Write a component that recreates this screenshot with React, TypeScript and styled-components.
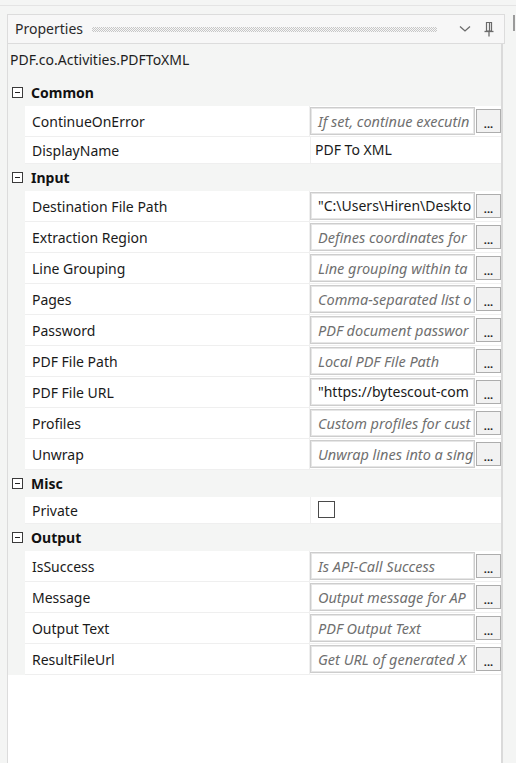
import React from 'react'
import styled, { createGlobalStyle } from 'styled-components'

const GlobalStyle = createGlobalStyle`
    body {
        margin: 0;
        background: #f4f5f4;
        font-family: "Noto Sans", "Open Sans", sans-serif;
        color: #1b1b1b;
    }
`

type Prop = {
    label: string
    value?: string
    hint?: string
    kind?: 'text' | 'plain' | 'check'
}

type Group = {
    name: string
    props: Prop[]
}

// values are cut where the editor box cuts them in the designer
const groups: Group[] = [
    {
        name: 'Common',
        props: [
            { label: 'ContinueOnError', hint: 'If set, continue executin' },
            { label: 'DisplayName', value: 'PDF To XML', kind: 'plain' },
        ],
    },
    {
        name: 'Input',
        props: [
            { label: 'Destination File Path', value: '"C:\\Users\\Hiren\\Deskto' },
            { label: 'Extraction Region', hint: 'Defines coordinates for' },
            { label: 'Line Grouping', hint: 'Line grouping within ta' },
            { label: 'Pages', hint: 'Comma-separated list o' },
            { label: 'Password', hint: 'PDF document passwor' },
            { label: 'PDF File Path', hint: 'Local PDF File Path' },
            { label: 'PDF File URL', value: '"https://bytescout-com' },
            { label: 'Profiles', hint: 'Custom profiles for cust' },
            { label: 'Unwrap', hint: 'Unwrap lines into a sing' },
        ],
    },
    {
        name: 'Misc',
        props: [{ label: 'Private', kind: 'check' }],
    },
    {
        name: 'Output',
        props: [
            { label: 'IsSuccess', hint: 'Is API-Call Success' },
            { label: 'Message', hint: 'Output message for AP' },
            { label: 'Output Text', hint: 'PDF Output Text' },
            { label: 'ResultFileUrl', hint: 'Get URL of generated X' },
        ],
    },
]

export default function App() {
    return (
        <>
            <GlobalStyle />
            <Page>
                <TopStrip>
                    <EdgeTick />
                </TopStrip>
                <Panel>
                    <Header>
                        <HeaderTitle>Properties</HeaderTitle>
                        <Grip />
                        <HeaderIcon>
                            <svg width="12" height="8" viewBox="0 0 12 8">
                                <path d="M1 1.5 L6 6 L11 1.5" fill="none" stroke="#6b6b6b" strokeWidth="1.3" />
                            </svg>
                        </HeaderIcon>
                        <HeaderIcon>
                            <svg width="10" height="15" viewBox="0 0 10 15">
                                <path d="M2.5 0.5 H7.5 V9 H2.5 Z" fill="none" stroke="#6b6b6b" strokeWidth="1.2" />
                                <path d="M5.5 0.5 V9" stroke="#6b6b6b" strokeWidth="1.2" />
                                <path d="M0.5 9.5 H9.5" stroke="#6b6b6b" strokeWidth="1.3" />
                                <path d="M5 9.5 V14.5" stroke="#6b6b6b" strokeWidth="1.3" />
                            </svg>
                        </HeaderIcon>
                    </Header>
                    <Body>
                        <TypeName>PDF.co.Activities.PDFToXML</TypeName>
                        <Grid>
                            {groups.map(g => (
                                <React.Fragment key={g.name}>
                                    <CategoryRow>
                                        <Expander />
                                        <CategoryName>{g.name}</CategoryName>
                                    </CategoryRow>
                                    {g.props.map(p => (
                                        <PropRow key={p.label} $tall={!p.kind || p.kind === 'text'}>
                                            <Gutter />
                                            <LabelCell>{p.label}</LabelCell>
                                            <ValueCell>
                                                {p.kind === 'plain' && <PlainValue>{p.value}</PlainValue>}
                                                {p.kind === 'check' && <CheckBox />}
                                                {(!p.kind || p.kind === 'text') && (
                                                    <>
                                                        <TextBox $hint={!p.value}>{p.value ?? p.hint}</TextBox>
                                                        <DotsButton>...</DotsButton>
                                                    </>
                                                )}
                                            </ValueCell>
                                        </PropRow>
                                    ))}
                                </React.Fragment>
                            ))}
                        </Grid>
                    </Body>
                </Panel>
            </Page>
        </>
    )
}

const Page = styled.div`
    height: 763px;
    display: flex;
    flex-direction: column;
    overflow: hidden;
`

const TopStrip = styled.div`
    height: 5px;
    border-bottom: 1px solid #e4e4e4;
    margin-bottom: 8px;
    position: relative;
`

const EdgeTick = styled.div`
    position: absolute;
    right: 1px;
    top: 15px;
    width: 2px;
    height: 16px;
    background: #9a9a9a;
`

const Panel = styled.section`
    flex: 1;
    margin-left: 7px;
    width: 498px;
    display: flex;
    flex-direction: column;
    min-height: 0;
`

const Header = styled.div`
    height: 28px;
    border: 1px solid #dcdcdc;
    background: #f7f7f7;
    display: flex;
    align-items: center;
    padding: 0 9px 0 7px;
`

const HeaderTitle = styled.span`
    font-size: 14px;
    color: #2a2a2a;
    padding-bottom: 1px;
`

const Grip = styled.div`
    flex: 1;
    height: 5px;
    margin: 1px 10px 0 9px;
    background: repeating-conic-gradient(#c6c6c6 0 25%, transparent 0 50%) 0 0 / 2px 2px;
`

const HeaderIcon = styled.span`
    display: flex;
    align-items: center;
    justify-content: center;
    width: 12px;
    margin-left: 12px;
    &:first-of-type {
        margin-left: 0;
    }
`

const Body = styled.div`
    flex: 1;
    margin-right: 2px;
    border-left: 1px solid #dcdcdc;
    border-right: 2px solid #dadada;
    background: #fff;
    display: flex;
    flex-direction: column;
`

const TypeName = styled.div`
    background: #f4f5f4;
    height: 35px;
    line-height: 31px;
    padding-left: 2px;
    font-size: 14px;
    color: #1e1e1e;
`

const Grid = styled.div`
    display: flex;
    flex-direction: column;
`

const CategoryRow = styled.div`
    height: 27px;
    background: #f4f5f4;
    display: flex;
    align-items: center;
    padding-left: 4px;
`

const Expander = styled.span`
    position: relative;
    width: 9px;
    height: 9px;
    border: 1px solid #3a3a3a;
    background: #fff;
    &::after {
        content: '';
        position: absolute;
        left: 2px;
        right: 2px;
        top: 4px;
        height: 1px;
        background: #222;
    }
`

const CategoryName = styled.span`
    margin-left: 8px;
    font-size: 14px;
    font-weight: 700;
    color: #111;
`

const PropRow = styled.div<{ $tall: boolean }>`
    height: ${p => (p.$tall ? 31 : 27)}px;
    display: flex;
`

const Gutter = styled.div`
    width: 17px;
    background: #f4f5f4;
`

const LabelCell = styled.div`
    width: 278px;
    padding-left: 7px;
    background: #fff;
    border-bottom: 1px solid #efefef;
    border-right: 1px solid #efefef;
    display: flex;
    align-items: center;
    font-size: 14px;
    color: #1a1a1a;
`

const ValueCell = styled.div`
    flex: 1;
    background: #fff;
    border-bottom: 1px solid #efefef;
    display: flex;
    align-items: center;
    gap: 1px;
    padding-bottom: 1px;
`

const TextBox = styled.div<{ $hint: boolean }>`
    box-sizing: border-box;
    width: 165px;
    height: 28px;
    border: 1px solid #cdcdcd;
    box-shadow: inset 0 0 0 1px #e6e6e6;
    background: #fff;
    padding: 0 4px 0 7px;
    display: flex;
    align-items: center;
    overflow: hidden;
    white-space: nowrap;
    font-size: ${p => (p.$hint ? 14.5 : 14)}px;
    font-style: ${p => (p.$hint ? 'italic' : 'normal')};
    color: ${p => (p.$hint ? '#6f6f6f' : '#1a1a1a')};
`

const DotsButton = styled.button`
    box-sizing: border-box;
    width: 25px;
    height: 24px;
    padding: 0 0 3px;
    border: 1px solid #adadad;
    background: #f2f2f2;
    font-family: "Noto Sans", sans-serif;
    font-size: 11px;
    font-weight: 700;
    color: #222;
    display: flex;
    align-items: flex-end;
    justify-content: center;
    line-height: 1;
`

const PlainValue = styled.span`
    padding-left: 4px;
    font-size: 14px;
    color: #1a1a1a;
`

const CheckBox = styled.span`
    box-sizing: border-box;
    width: 17px;
    height: 17px;
    margin-left: 7px;
    border: 1px solid #4a4a4a;
    background: #fff;
`
